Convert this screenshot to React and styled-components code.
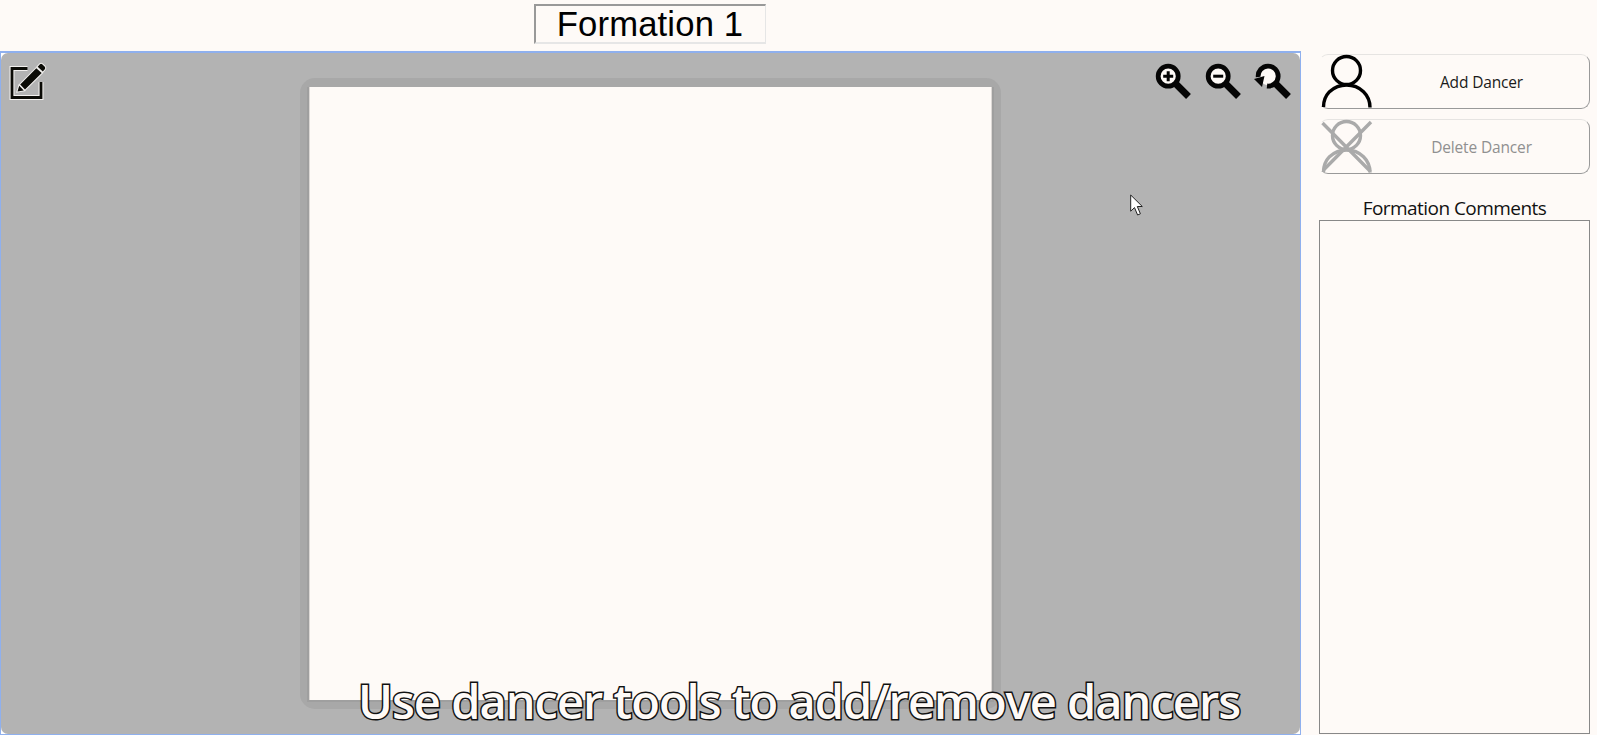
import React from "react";
import styled, { createGlobalStyle } from "styled-components";

const GlobalStyle = createGlobalStyle`
  * { box-sizing: border-box; }
  html, body { margin: 0; padding: 0; overflow: hidden; }
  body { background: #fefaf7; color: #000; }
`;

const Shell = styled.div`
  width: 1597px;
  height: 735px;
  display: grid;
  grid-template-columns: 1301px 271px;
  column-gap: 18px;
  position: relative;
  overflow: hidden;
`;

const Editor = styled.main`
  display: grid;
  grid-template-rows: 51px 684px;
`;

const Header = styled.header`
  display: flex;
  justify-content: center;
  align-items: flex-start;
  padding: 4px 1px 0 0;
`;

const TitleField = styled.div`
  width: 232px;
  height: 40px;
  border-style: solid;
  border-width: 2px 1px 2px 2px;
  border-color: #999 #e6e6e6 #e6e6e6 #999;
  display: flex;
  align-items: center;
  justify-content: center;
  padding-right: 1px;
  font: 34.67px/36px "Liberation Sans", Arial, sans-serif;
  letter-spacing: 0.15px;
  white-space: nowrap;
`;

const StageFrame = styled.section`
  border: 1px solid #8fb0ee;
  border-top-width: 2px;
  background: #fff;
`;

const Stage = styled.div`
  height: 100%;
  display: flex;
  justify-content: space-between;
  align-items: flex-start;
  background: #b3b3b3;
  border-radius: 7px;
`;

const ToolGroup = styled.div`
  width: 180px;
  display: flex;
  justify-content: ${(p) => (p.$end ? "flex-end" : "flex-start")};
  gap: 10px;
  padding: ${(p) => (p.$end ? "8px 6px 0 0" : "7px 0 0 6px")};
`;

const IconButton = styled.button`
  padding: 0;
  border: 0;
  background: transparent;
  width: 40px;
  height: 40px;
  svg { display: block; overflow: visible; }
`;

const Halo = styled.div`
  margin-top: 25px;
  width: 701px;
  height: 631px;
  padding: 9px 7px 7px;
  border-radius: 15px;
  background: #a8a8a8;
`;

const Sheet = styled.div`
  height: 615px;
  border: solid #9f9f9f;
  border-width: 0 2px 2px;
  background: #fefaf7;
  box-shadow: inset 1px 0 #ddd9d6, inset -1px 0 #ddd9d6;
`;

const Sidebar = styled.aside`
  display: flex;
  flex-direction: column;
  padding-top: 54px;
`;

const DancerButton = styled.button`
  width: 271px;
  height: 55px;
  margin-bottom: 10px;
  padding: 0;
  display: grid;
  grid-template-columns: 54px 1fr;
  align-items: center;
  background: transparent;
  border: 1px solid;
  border-color: #e6e4e2 #999 #999 transparent;
  border-radius: 9px;
  color: ${(p) => (p.disabled ? "#909090" : "#1a1a1a")};
  font: 15.5px "Open Sans", "Noto Sans", sans-serif;
  letter-spacing: -0.15px;
  svg { display: block; overflow: visible; }
`;

const CommentsLabel = styled.label`
  height: 36px;
  padding-top: 11px;
  text-align: center;
  font: 19px/26px "Open Sans", "Noto Sans", sans-serif;
  letter-spacing: -0.55px;
  color: #111;
  white-space: nowrap;
`;

const Comments = styled.textarea`
  width: 271px;
  height: 514px;
  resize: none;
  border: 1px solid #888;
  border-radius: 0;
  background: transparent;
  outline: none;
`;

const Caption = styled.div`
  position: absolute;
  left: 358px;
  top: 669px;
  line-height: 64px;
  font-family: "Open Sans", "Noto Sans", sans-serif;
  font-weight: 600;
  font-size: 47px;
  letter-spacing: -0.98px;
  color: #fefaf7;
  -webkit-text-stroke: 3px #111;
  paint-order: stroke fill;
  white-space: nowrap;
`;

const Pointer = styled.svg`
  position: absolute;
  left: 1130px;
  top: 194px;
`;

function EditIcon() {
  const frame = "M20.5 9.5H5V38.5H34V23";
  const pencil = "M13.2 25.5L29.3 9.3L34.7 14L18 30.6ZM10.5 32.5L12.2 26.8L16.8 31.4ZM30.7 7.8L33 5.3Q34 4.3 35.2 5.3L37.8 7.8Q38.8 9 37.8 10.2L35.8 12.5Z";
  return (
    <svg width="40" height="44" viewBox="0 1 40 44">
      <path d={frame} fill="none" stroke="#f2f0ee" strokeWidth="5" />
      <path d={frame} fill="none" stroke="#0b0b06" strokeWidth="2.8" />
      <path d={pencil} fill="#0b0b06" stroke="#f2f0ee" strokeWidth="2" paintOrder="stroke" />
    </svg>
  );
}

function Lens({ kind }) {
  return (
    <svg width="40" height="40" viewBox="0 0 40 40">
      <circle cx="14.2" cy="15.2" r="9" fill="#fefaf7" />
      {kind === "reset" ? (
        <>
          <path d="M4.2 16A10 10 0 1 1 13 25" fill="none" stroke="#050505" strokeWidth="4.8" />
          <path d="M0 18L10.5 15L8 26Z" fill="#050505" />
        </>
      ) : (
        <circle cx="14.2" cy="15.2" r="10" fill="none" stroke="#050505" strokeWidth="4.8" />
      )}
      <path d="M21 22L34.5 35.5" stroke="#050505" strokeWidth="6.8" />
      {kind !== "reset" && <path d={kind === "in" ? "M9.2 15.2H19.2M14.2 10.2V20.2" : "M9.2 15.2H19.2"} stroke="#050505" strokeWidth="3" />}
    </svg>
  );
}

function DancerIcon({ removed }) {
  return (
    <svg width="54" height="53" viewBox="0 0 54 53" fill="none" stroke={removed ? "#aaa" : "#000"} strokeWidth="3.4">
      <circle cx="26.5" cy="15.5" r="14" />
      <path d="M3.5 52Q3.5 43 9.5 36.7Q17 30 26.5 30Q36.5 30 43.5 36.7Q50 43 50 52.5" />
      {removed && <path d="M2.5 3L50.5 51.5M51 2L3 50.5" />}
    </svg>
  );
}

export default function App() {
  return (
    <>
      <GlobalStyle />
      <Shell>
        <Editor>
          <Header><TitleField>Formation 1</TitleField></Header>
          <StageFrame>
            <Stage>
              <ToolGroup>
                <IconButton aria-label="Edit"><EditIcon /></IconButton>
              </ToolGroup>
              <Halo><Sheet /></Halo>
              <ToolGroup $end>
                <IconButton aria-label="Zoom in"><Lens kind="in" /></IconButton>
                <IconButton aria-label="Zoom out"><Lens kind="out" /></IconButton>
                <IconButton aria-label="Reset zoom"><Lens kind="reset" /></IconButton>
              </ToolGroup>
            </Stage>
          </StageFrame>
        </Editor>
        <Sidebar>
          <DancerButton><DancerIcon /><span>Add Dancer</span></DancerButton>
          <DancerButton disabled><DancerIcon removed /><span>Delete Dancer</span></DancerButton>
          <CommentsLabel htmlFor="comments">Formation Comments</CommentsLabel>
          <Comments id="comments" />
        </Sidebar>
        <Pointer width="14" height="23" viewBox="0 0 14 23">
          <path d="M.7 1V17.2L4.5 13.6L7.6 21L10.4 19.8L7.3 12.5H12.3Z" fill="#fff" stroke="#222" />
        </Pointer>
        <Caption>Use dancer tools to add/remove dancers</Caption>
      </Shell>
    </>
  );
}
